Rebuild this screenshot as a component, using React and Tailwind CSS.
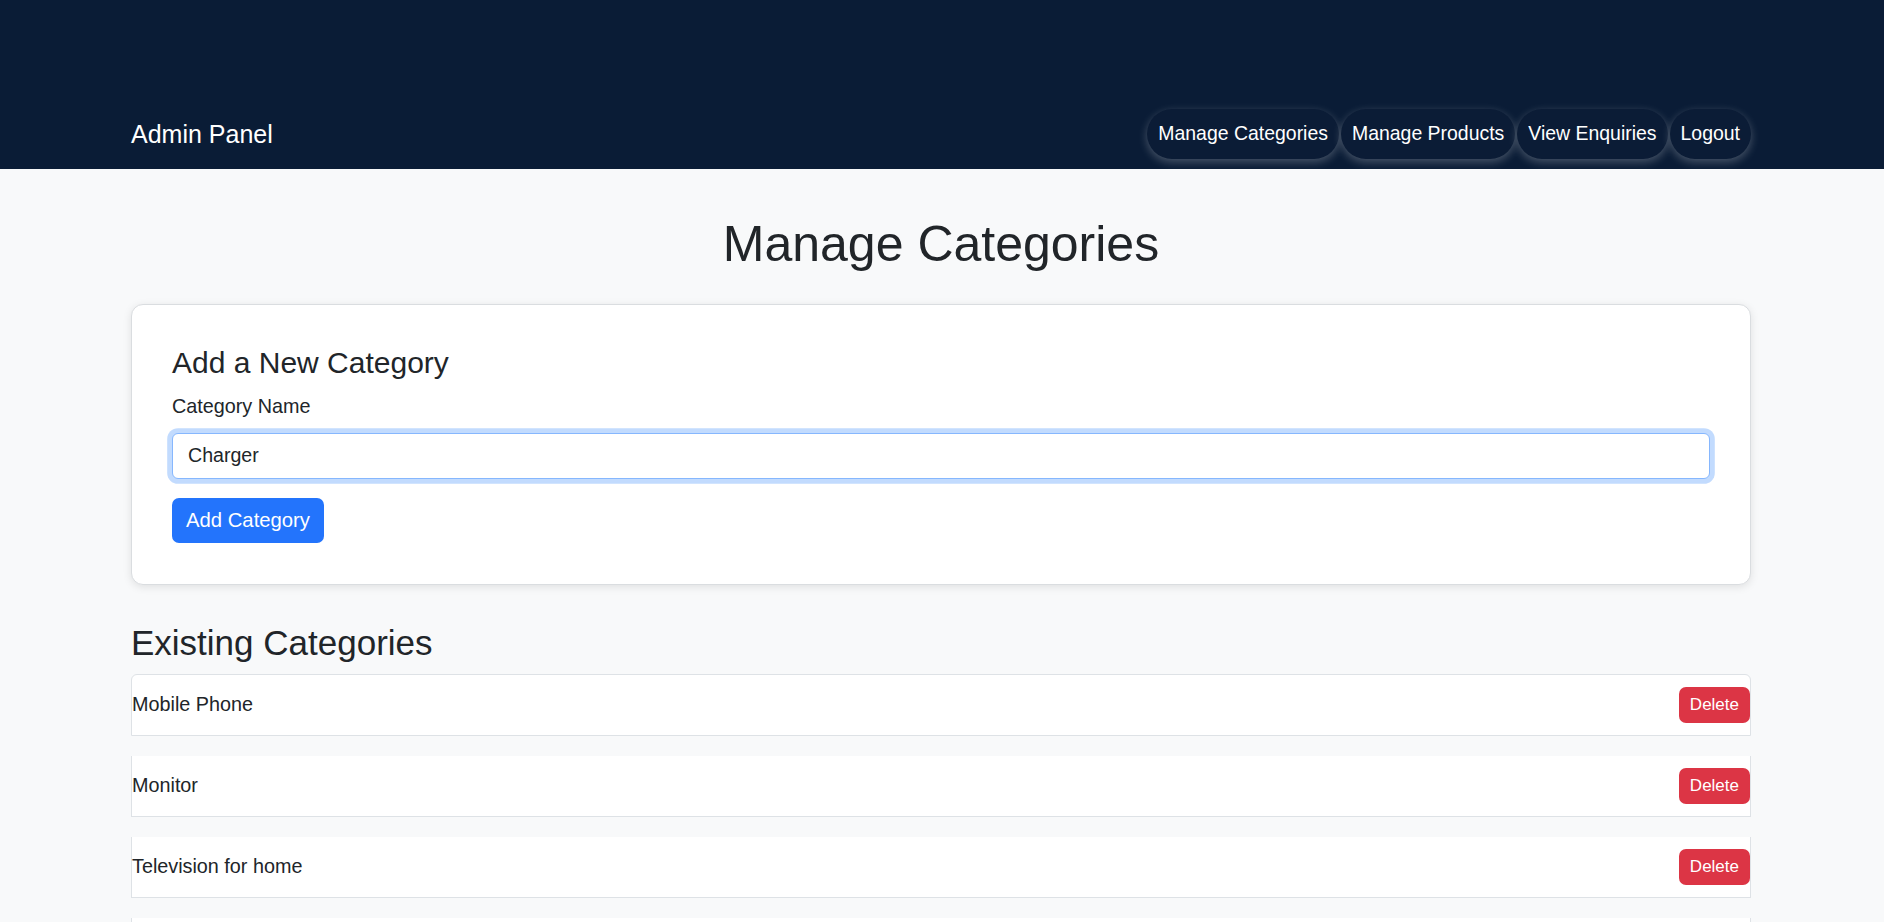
import React, { useState } from 'react';

const navLinks = ['Manage Categories', 'Manage Products', 'View Enquiries', 'Logout'];

const App = () => {
  const [name, setName] = useState('Charger');
  const categories = ['Mobile Phone', 'Monitor', 'Television for home', 'Headphones'];

  return (
    <div className="min-h-screen bg-[#f8f9fa] text-[#212529] font-['Liberation_Sans',Arial,sans-serif]">
      <header className="h-[169px] bg-[#0a1c36] flex items-end">
        <nav className="w-full pl-[131px] pr-[133px] pb-[10px] flex items-center justify-between">
          <a className="text-[25px] leading-[30px] text-white">Admin Panel</a>
          <ul className="flex items-center gap-[2px]">
            {navLinks.map((link) => (
              <li key={link}>
                <a className="h-[50px] px-[11px] flex items-center rounded-full bg-[#0b1c36] text-white text-[19.45px] shadow-[0_3px_10px_rgba(255,255,255,0.26)]">
                  {link}
                </a>
              </li>
            ))}
          </ul>
        </nav>
      </header>

      <main className="pl-[131px] pr-[133px]">
        <h1 className="mt-[45px] text-center text-[50px] leading-[1.2]">Manage Categories</h1>

        <div className="mt-[30px] bg-white border border-[#dadde0] rounded-[12px] shadow-[0_2px_8px_rgba(0,0,0,0.1)] px-[40px] pt-[40px] pb-[41px]">
          <h4 className="text-[30px] leading-[1.2] mb-[11px]">Add a New Category</h4>
          <label className="block text-[19.8px] leading-[1.5] mb-[11px]">Category Name</label>
          <input
            value={name}
            onChange={(e) => setName(e.target.value)}
            className="block w-full h-[46px] px-[15px] text-[19.6px] text-[#212529] bg-white border border-[#86b7fe] rounded-[6px] outline-none shadow-[0_0_0_4.8px_rgba(13,110,253,0.25)]"
          />
          <button className="mt-[19px] h-[45px] px-[14px] rounded-[7px] bg-[#2374fc] text-white text-[20.3px]">
            Add Category
          </button>
        </div>

        <h3 className="mt-[37px] text-[35px] leading-[1.2] mb-[10px]">Existing Categories</h3>
        <ul>
          {categories.map((cat, index) => (
            <li
              key={cat}
              className={
                index === 0
                  ? 'h-[62px] mb-[20px] bg-white border border-[#dee2e6] rounded-t-[6px] flex items-center justify-between'
                  : 'h-[61px] mb-[20px] bg-white border border-t-0 border-[#dee2e6] flex items-center justify-between'
              }
            >
              <span className="text-[19.8px]">{cat}</span>
              <button className="h-[36px] px-[11px] rounded-[7px] bg-[#dc3545] text-white text-[17px]">Delete</button>
            </li>
          ))}
        </ul>
      </main>
    </div>
  );
};

export default App;
